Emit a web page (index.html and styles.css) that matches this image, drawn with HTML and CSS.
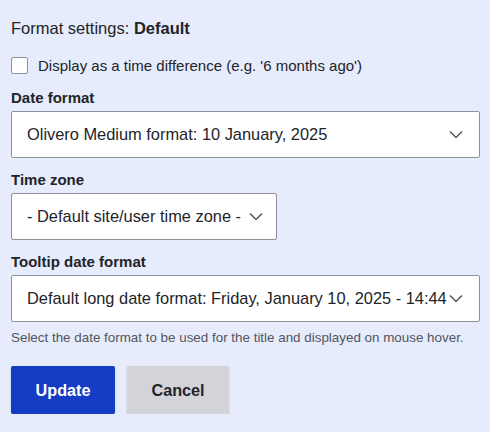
FILE: index.html
```html
<!DOCTYPE html>
<html lang="en">
<head>
<meta charset="utf-8">
<title>Format settings</title>
<link rel="stylesheet" href="styles.css">
</head>
<body>
<form class="form">
  <div class="title">Format settings: <strong>Default</strong></div>
  <label class="check-row">
    <span class="checkbox"></span>
    <span class="check-label">Display as a time difference (e.g. '6 months ago')</span>
  </label>
  <div class="field">
    <div class="label">Date format</div>
    <div class="select select-full">
      <span class="select-text">Olivero Medium format: 10 January, 2025</span>
      <svg class="chevron" width="14" height="9" viewBox="0 0 14 9"><path d="M1 1.5 L7 7.5 L13 1.5" fill="none" stroke="#55565b" stroke-width="1.5"/></svg>
    </div>
  </div>
  <div class="field">
    <div class="label">Time zone</div>
    <div class="select select-auto">
      <span class="select-text">- Default site/user time zone -</span>
      <svg class="chevron" width="14" height="9" viewBox="0 0 14 9"><path d="M1 1.5 L7 7.5 L13 1.5" fill="none" stroke="#55565b" stroke-width="1.5"/></svg>
    </div>
  </div>
  <div class="field">
    <div class="label">Tooltip date format</div>
    <div class="select select-full">
      <span class="select-text">Default long date format: Friday, January 10, 2025 - 14:44</span>
      <svg class="chevron" width="14" height="9" viewBox="0 0 14 9"><path d="M1 1.5 L7 7.5 L13 1.5" fill="none" stroke="#55565b" stroke-width="1.5"/></svg>
    </div>
    <div class="help">Select the date format to be used for the title and displayed on mouse hover.</div>
  </div>
  <div class="actions">
    <button type="button" class="btn btn-primary">Update</button>
    <button type="button" class="btn btn-secondary">Cancel</button>
  </div>
</form>
</body>
</html>
```

FILE: styles.css
```css
html, body {
  margin: 0;
  padding: 0;
  background: #e6ecfb;
}
body {
  font-family: "Liberation Sans", Arial, sans-serif;
  color: #232429;
}
.form {
  padding: 16px 10px 0 11px;
}
.title {
  font-size: 16.5px;
  line-height: 24px;
}
.title strong {
  font-weight: 700;
}
.check-row {
  display: flex;
  align-items: center;
  gap: 10px;
  margin-top: 13px;
  height: 24px;
}
.checkbox {
  box-sizing: border-box;
  width: 17px;
  height: 17px;
  background: #fff;
  border: 1px solid #8e929c;
  border-radius: 2px;
}
.check-label {
  font-size: 15px;
  color: #232429;
}
.field {
  margin-top: 12px;
}
.field + .field {
  margin-top: 13px;
}
.label {
  font-size: 15px;
  font-weight: 700;
  line-height: 18px;
  margin-bottom: 4px;
}
.select {
  box-sizing: border-box;
  height: 47px;
  display: flex;
  align-items: center;
  background: #fff;
  border: 1px solid #919297;
  border-radius: 2px;
  padding: 0 16px 0 15px;
  font-size: 16.4px;
  color: #232429;
}
.select-full {
  width: 100%;
}
.select-auto {
  display: inline-flex;
  width: 266px;
  padding-right: 13px;
}
.select-text {
  flex: 1;
  white-space: nowrap;
}
.chevron {
  flex: none;
  margin-left: 2px;
}
.help {
  margin-top: 7px;
  font-size: 13.4px;
  line-height: 18px;
  color: #545560;
}
.actions {
  display: flex;
  gap: 12px;
  margin-top: 19px;
}
.btn {
  box-sizing: border-box;
  height: 48px;
  padding: 0 24px;
  border: 0;
  border-radius: 2px;
  font-family: "Liberation Sans", Arial, sans-serif;
  font-size: 16.2px;
  font-weight: 700;
  box-shadow: 0 1px 2px rgba(0, 0, 0, 0.18);
}
.btn-primary {
  background: #153cc4;
  color: #fff;
  width: 104px;
}
.btn-secondary {
  background: #d3d4d9;
  color: #232429;
  width: 102px;
}
```
